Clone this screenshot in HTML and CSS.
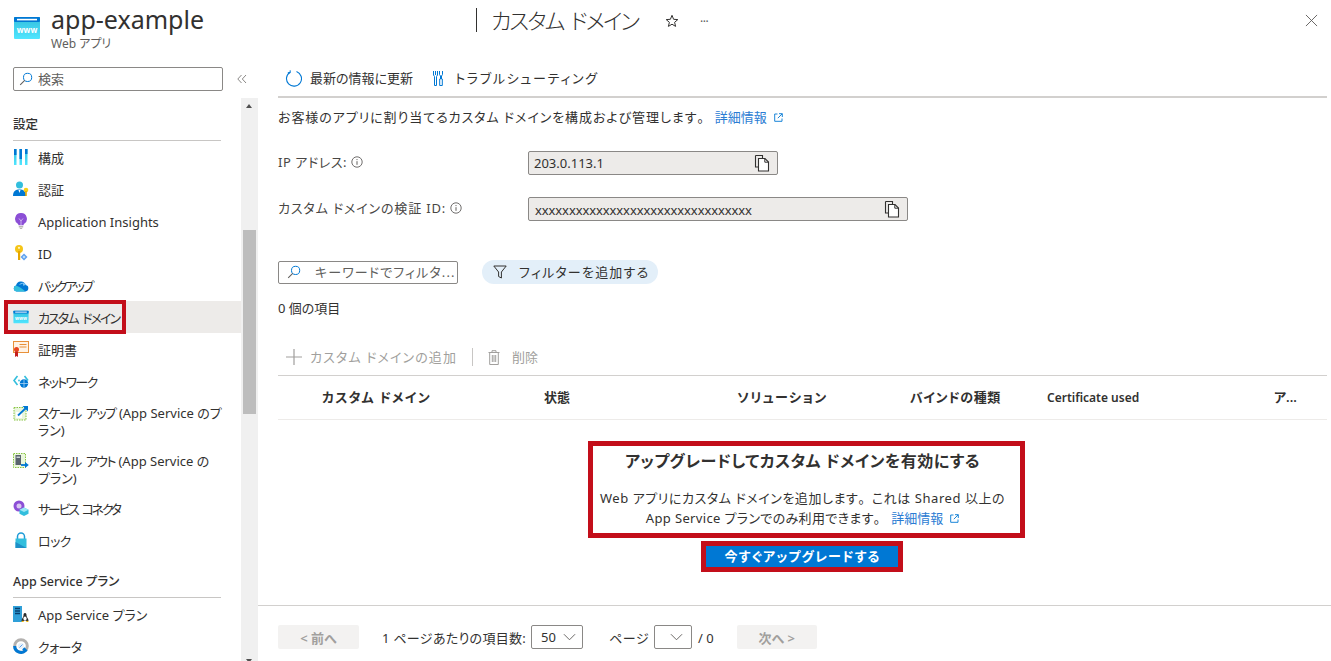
FILE: index.html
```html
<!DOCTYPE html>
<html lang="ja">
<head>
<meta charset="utf-8">
<title>カスタム ドメイン</title>
<link rel="stylesheet" href="styles.css">
</head>
<body>
<svg class="defs" width="0" height="0" aria-hidden="true">
  <defs>
    <linearGradient id="www" x1="0" y1="0" x2="0" y2="1"><stop offset="0" stop-color="#32bedd"/><stop offset="1" stop-color="#50e6ff"/></linearGradient>
    <symbol id="i-www" viewBox="0 0 26 22">
      <rect x="0" y="0" width="26" height="22" rx="1" fill="url(#www)"/>
      <rect x="0" y="0" width="26" height="5" rx="1" fill="#0078d4"/>
      <rect x="3" y="1.800" width="20" height="1.600" fill="#fff"/>
      <text x="13" y="15.500" text-anchor="middle" class="wwwtext">www</text>
    </symbol>
    <symbol id="i-search" viewBox="0 0 14 14">
      <circle cx="8.600" cy="5.400" r="4.100" fill="none" stroke="#0078d4" stroke-width="1"/>
      <path d="M5.700 8.300 1.200 12.800" stroke="#605e5c" stroke-width="1.100" fill="none"/>
    </symbol>
    <symbol id="i-copy" viewBox="0 0 16 18">
      <path d="M1.500 1.500h7l0 3M1.500 1.500v11.500h3" fill="none" stroke="#323130" stroke-width="1.100"/>
      <path d="M4.500 4.500h6.500l3.500 3.500v9h-10z" fill="#fff" stroke="#323130" stroke-width="1.100"/>
      <path d="M10.800 4.700v3.500h3.600" fill="none" stroke="#323130" stroke-width="1"/>
    </symbol>
    <symbol id="i-info" viewBox="0 0 12 12">
      <circle cx="6" cy="6" r="5.200" fill="none" stroke="#605e5c" stroke-width=".9"/>
      <path d="M6 5.200v3.600M6 3.100v1" stroke="#605e5c" stroke-width="1" fill="none"/>
    </symbol>
    <symbol id="i-ext" viewBox="0 0 9 9">
      <path d="M3.500 1H.7v7.300H8V5.500" fill="none" stroke="#0078d4" stroke-width=".9"/>
      <path d="M5 .7h3.300V4M8.200.8 3.800 5.200" fill="none" stroke="#0078d4" stroke-width=".9"/>
    </symbol>
    <symbol id="i-chev" viewBox="0 0 14 8">
      <path d="M1 1 7 7l6-6" fill="none" stroke="#605e5c" stroke-width="1"/>
    </symbol>
  </defs>
</svg>

<header class="top">
  <svg class="brand-icon"><use href="#i-www"/></svg>
  <div class="brand">
    <h1 class="brand-title">app-example</h1>
    <div class="brand-sub">Web アプリ</div>
  </div>
  <div class="blade-title"><span class="blade-bar"></span><span>カスタム ドメイン</span></div>
  <svg class="star" viewBox="0 0 14 14"><path d="M7 1.300 8.600 5.300l4.200.3-3.200 2.700 1 4.100L7 10.200l-3.600 2.200 1-4.100L1.200 5.600l4.200-.3z" fill="none" stroke="#323130" stroke-width="1"/></svg>
  <div class="more">···</div>
  <svg class="close" viewBox="0 0 14 14"><path d="M1 1l12 12M13 1 1 13" stroke="#605e5c" stroke-width="1" fill="none"/></svg>
</header>

<div class="layout">
  <aside class="side">
    <div class="side-search-row">
      <div class="side-search">
        <svg class="ico14"><use href="#i-search"/></svg>
        <span>検索</span>
      </div>
      <svg class="collapse" viewBox="0 0 10 10"><path d="M4.500 1 .8 5l3.700 4M9 1 5.300 5 9 9" fill="none" stroke="#8a8886" stroke-width="1"/></svg>
    </div>
    <div class="side-body">
      <nav class="nav">
        <div class="nav-head">設定</div>
        <a class="nav-item"><svg class="nav-ico" viewBox="0 0 16 16"><rect x="1" y="0" width="2.500" height="16" fill="url(#www)"/><rect x="1" y="0" width="2.500" height="6" fill="#0078d4"/><rect x="6.500" y="0" width="2.500" height="16" fill="url(#www)"/><rect x="6.500" y="0" width="2.500" height="10" fill="#0078d4"/><rect x="12" y="0" width="2.500" height="16" fill="url(#www)"/><rect x="12" y="0" width="2.500" height="5" fill="#0078d4"/></svg><span>構成</span></a>
        <a class="nav-item"><svg class="nav-ico" viewBox="0 0 16 16"><circle cx="6.500" cy="4" r="3.500" fill="#32bedd"/><path d="M0 15c0-5 2.500-6.500 6.500-6.500S13 10 13 15z" fill="#0078d4"/><path d="M5.500 9h2l-1 3z" fill="#fff"/><circle cx="13" cy="9" r="2.300" fill="#fcd116"/><rect x="12.200" y="10" width="1.600" height="5" fill="#e6a700"/></svg><span>認証</span></a>
        <a class="nav-item"><svg class="nav-ico" viewBox="0 0 16 16"><path d="M8 0a5.800 5.800 0 0 0-3.200 10.700c.5.400.7 1 .7 1.600h5c0-.6.2-1.200.7-1.600A5.800 5.800 0 0 0 8 0z" fill="#8c4fd6"/><path d="M6 5.500 8 8l2-2.500M8 8v4" stroke="#d9c7f2" stroke-width=".8" fill="none"/><path d="M5.800 13h4.400v1.500H5.800zM6.800 15h2.400v1H6.800z" fill="#b8b6b4"/></svg><span>Application Insights</span></a>
        <a class="nav-item"><svg class="nav-ico" viewBox="0 0 16 16"><circle cx="6" cy="4" r="4" fill="#f5c518"/><rect x="5" y="6" width="2.200" height="9" fill="#e6a700"/><circle cx="6" cy="2.800" r="1.100" fill="#fff4c2"/><path d="M11 8.500l3.500 3.500-3.500 3.500L7.500 12z" fill="#5ea0ef"/><path d="M11 10.500l1.500 1.500-1.500 1.500L9.500 12z" fill="#c3e3fb"/></svg><span>ID</span></a>
        <a class="nav-item"><svg class="nav-ico" viewBox="0 0 16 16"><path d="M3.500 14.500A3 3 0 0 1 3 8.600 5 5 0 0 1 12.700 8 3.300 3.300 0 0 1 12.500 14.500z" fill="#0078d4"/><path d="M6 8a4 4 0 0 1 6.600-.8l1 .6-3.600 1 .1-2.300" fill="#7cc4f5"/><path d="M3.500 14.500A3 3 0 0 1 3 8.600c3 1 6 3 9.500 5.900z" fill="#32bedd"/></svg><span class="ls-backup">バックアップ</span></a>
        <a class="nav-item is-on"><svg class="nav-ico" viewBox="0 0 15 12"><use href="#i-www"/></svg><span class="ls-domain">カスタム ドメイン</span></a>
        <a class="nav-item"><svg class="nav-ico" viewBox="0 0 16 16"><rect x=".5" y=".5" width="15" height="11" fill="#fff3e6" stroke="#e8913a"/><path d="M6.500 3.500h7M6.500 6h7" stroke="#e8913a" stroke-width="1.200"/><circle cx="3.500" cy="8.500" r="2.500" fill="#e8451f"/><path d="M2 10.500h3V16l-1.500-1L2 16z" fill="#c41f1f"/></svg><span>証明書</span></a>
        <a class="nav-item"><svg class="nav-ico" viewBox="0 0 16 16"><path d="M4.500 3 1 7.500 4.500 12" fill="none" stroke="#32bedd" stroke-width="1.600"/><path d="M11.500 3 15 7.500" fill="none" stroke="#32bedd" stroke-width="1.600"/><circle cx="11" cy="10.500" r="4.200" fill="#0078d4"/><path d="M7 10.500h8M11 6.500v8" stroke="#a9d3f2" stroke-width=".8"/><circle cx="6" cy="7.500" r=".9" fill="#32bedd"/></svg><span class="ls-network">ネットワーク</span></a>
        <a class="nav-item two"><svg class="nav-ico" viewBox="0 0 16 16"><rect x="1" y="2.500" width="12" height="12.500" fill="#eaf6dc" stroke="#86c440" stroke-dasharray="1.500 1"/><rect x="3" y="7" width="6" height="6" fill="#fff"/><path d="M5 10.500 14 2" stroke="#0078d4" stroke-width="1.800"/><path d="M9.500 1h5.500v5.500z" fill="#0078d4"/></svg><span><span class="kana">スケール アップ</span> (App Service のプ<br>ラン)</span></a>
        <a class="nav-item two"><svg class="nav-ico" viewBox="0 0 16 16"><rect x=".5" y=".5" width="12" height="14" fill="#eaf6dc" stroke="#86c440" stroke-dasharray="1.500 1"/><rect x="2.500" y="2" width="5.500" height="10" fill="#59636e"/><rect x="3.500" y="3.500" width="3.500" height="1.500" fill="#c8ced4"/><path d="M8 12h5.500" stroke="#0078d4" stroke-width="1.800"/><path d="M12 9l3.800 3-3.800 3z" fill="#0078d4"/></svg><span><span class="kana">スケール アウト</span> (App Service の<br>プラン)</span></a>
        <a class="nav-item"><svg class="nav-ico" viewBox="0 0 16 16"><circle cx="6" cy="6" r="5.500" fill="#8c4fd6"/><circle cx="6" cy="6" r="2.500" fill="#d9c7f2"/><path d="M11 7.500l4.500 2.200v4.100L11 16l-4.500-2.200V9.700z" fill="#32bedd"/><path d="M11 7.500l4.500 2.200L11 12 6.500 9.700z" fill="#9ce7f5"/></svg><span class="ls-conn">サービス コネクタ</span></a>
        <a class="nav-item"><svg class="nav-ico" viewBox="0 0 16 16"><path d="M4.500 7V4.500a3.500 3.500 0 0 1 7 0V7" fill="none" stroke="#1e9bd7" stroke-width="1.500"/><rect x="2.500" y="6.500" width="11" height="9.500" fill="#32bedd"/><path d="M2.500 10 13.500 16h-11z" fill="#1e8fc7"/></svg><span class="ls-short">ロック</span></a>
        <div class="nav-head second">App Service プラン</div>
        <a class="nav-item"><svg class="nav-ico" viewBox="0 0 16 16"><rect x="0" y="0" width="9" height="16" fill="#2f9fd8"/><path d="M2 2.500h5M2 5h5M2 7.500h5" stroke="#063f6e" stroke-width="1.300"/><path d="M12 7c-1.300 0-1.500 1.200-1.500 2.500 0 1.500-2 3-2 5.500h7c0-2.500-2-4-2-5.500C13.500 8.200 13.300 7 12 7z" fill="#2a2a2a"/><ellipse cx="12" cy="12.600" rx="1.600" ry="2.200" fill="#fff"/><path d="M8 16l2-1.500 1 1.500zM16 16l-2-1.500-1 1.500z" fill="#f5b400"/></svg><span>App Service プラン</span></a>
        <a class="nav-item"><svg class="nav-ico" viewBox="0 0 16 16"><circle cx="8" cy="8" r="6.300" fill="none" stroke="#b3b1af" stroke-width="3"/><path d="M1.700 8A6.300 6.300 0 0 0 12.500 12.500L10.200 10.200" fill="none" stroke="#0078d4" stroke-width="3"/><circle cx="8" cy="8" r="3" fill="#e6f1fa"/><path d="M6.500 9.500l3-3" stroke="#5ea0ef" stroke-width="1"/></svg><span class="ls-short">クォータ</span></a>
      </nav>
      <div class="scrollbar">
        <div class="sb-up"></div>
        <div class="sb-thumb"></div>
        <div class="sb-down"></div>
      </div>
    </div>
  </aside>

  <main class="main">
    <div class="toolbar">
      <a class="tool"><svg class="tool-ico" viewBox="0 0 17 17"><path d="M5.200 2.200A7.500 7.500 0 1 0 11.500 1.600" fill="none" stroke="#0078d4" stroke-width="1.100"/><path d="M5.200 .3v2.400H2.800" fill="none" stroke="#0078d4" stroke-width="1"/></svg><span>最新の情報に更新</span></a>
      <a class="tool tool-wide"><svg class="tool-ico tr" viewBox="0 0 12 17"><path d="M1.500 1v4l1 1.500v9h2v-9l1-1.500V1M3.500 1v4" fill="none" stroke="#0078d4" stroke-width="1"/><path d="M7.500 1v3.500l1 1.500v3h-.8v6.500h2.600V9h-.8V6l1-1.500V1" fill="none" stroke="#0078d4" stroke-width="1"/></svg><span>トラブルシューティング</span></a>
    </div>
    <div class="content">
      <p class="desc"><span class="desc-text">お客様のアプリに割り当てるカスタム ドメインを構成および管理します<span class="fw">。</span></span> <a class="link">詳細情報<svg class="ext"><use href="#i-ext"/></svg></a></p>
      <div class="field first">
        <label class="field-label"><span class="ls-ip">IP アドレス:</span> <svg class="info"><use href="#i-info"/></svg></label>
        <div class="ro ro-ip"><span>203.0.113.1</span><svg class="copy"><use href="#i-copy"/></svg></div>
      </div>
      <div class="field">
        <label class="field-label"><span class="ls-verify">カスタム ドメインの検証 ID:</span> <svg class="info"><use href="#i-info"/></svg></label>
        <div class="ro ro-id"><span>xxxxxxxxxxxxxxxxxxxxxxxxxxxxxxxx</span><svg class="copy"><use href="#i-copy"/></svg></div>
      </div>
      <div class="filters">
        <div class="filter-box"><svg class="ico14"><use href="#i-search"/></svg><span>キーワードでフィルタ...</span></div>
        <div class="pill"><svg class="pill-ico" viewBox="0 0 14 14"><path d="M.8 1h12.400L8.400 7v6l-2.800-1.500V7z" fill="none" stroke="#323130" stroke-width="1"/></svg><span>フィルターを追加する</span></div>
      </div>
      <div class="count">0 個の項目</div>
      <div class="cmd">
        <a class="cmd-btn"><svg class="cmd-plus" viewBox="0 0 16 16"><path d="M8 0v16M0 8h16" stroke="#a19f9d" stroke-width="1.200"/></svg><span class="cmd-add">カスタム ドメインの追加</span></a>
        <div class="cmd-sep"></div>
        <a class="cmd-btn"><svg class="cmd-trash" viewBox="0 0 12 15"><path d="M.5 2.500h11M4 2.500V.7h4v1.800M1.700 2.500v12h8.600v-12M4.300 5v7M6 5v7M7.700 5v7" fill="none" stroke="#a19f9d" stroke-width="1"/></svg><span>削除</span></a>
      </div>
      <div class="thead">
        <div class="th-domain">カスタム ドメイン</div>
        <div>状態</div>
        <div class="th-solution">ソリューション</div>
        <div class="th-bind">バインドの種類</div>
        <div class="th-en">Certificate used</div>
        <div>ア...</div>
      </div>
      <section class="empty">
        <h2 class="empty-title">アップグレードしてカスタム ドメインを有効にする</h2>
        <p class="empty-text">Web アプリにカスタム ドメインを追加します<span class="fw">。</span>これは Shared 以上の<br><span class="empty-second">App Service プランでのみ利用できます<span class="fw">。</span></span> <a class="link">詳細情報<svg class="ext"><use href="#i-ext"/></svg></a></p>
        <button class="upgrade" type="button">今すぐアップグレードする</button>
      </section>
    </div>
    <footer class="pager">
      <div class="pg-btn pg-prev">&lt; 前へ</div>
      <span class="pg-label pg-per">1 ページあたりの項目数:</span>
      <div class="pg-sel sel-50"><span>50</span><svg class="chev"><use href="#i-chev"/></svg></div>
      <span class="pg-label pg-page">ページ</span>
      <div class="pg-sel sel-page"><svg class="chev"><use href="#i-chev"/></svg></div>
      <span class="pg-label pg-of">/ 0</span>
      <div class="pg-btn pg-next">次へ &gt;</div>
    </footer>
  </main>
</div>

<div class="mark mark-nav"></div>
<div class="mark mark-empty"></div>
<div class="mark mark-btn"></div>
</body>
</html>
```

FILE: styles.css
```css
* { box-sizing: border-box; }
html, body { margin: 0; padding: 0; height: 100%; }
body {
  position: relative;
  width: 1331px;
  height: 661px;
  overflow: hidden;
  background: #fff;
  color: #323130;
  font-family: "Noto Sans", "Noto Sans CJK JP", sans-serif;
  font-size: 13px;
  font-feature-settings: "palt";
  line-height: 17px;
}
.defs { position: absolute; }
.wwwtext { font: 700 8px "Noto Sans", sans-serif; fill: #fff; }
.fw { font-feature-settings: normal; }

/* header */
.top { display: flex; align-items: flex-start; height: 62px; position: relative; }
.brand-icon { width: 26px; height: 22px; margin: 17px 0 0 14px; flex: none; }
.brand { margin-left: 11px; width: 425px; flex: none; }
.brand-title { margin: 2px 0 0; font-size: 25px; line-height: 34px; font-weight: 400; }
.brand-sub { font-size: 12px; color: #605e5c; line-height: 16px; }
.blade-title {
  display: flex; align-items: center; height: 30px; margin-top: 5px; width: 189px; flex: none;
  font-size: 22px; line-height: 30px; font-weight: 300; letter-spacing: -1.900px; word-spacing: 3px; color: #323130;
}
.blade-bar { width: 1px; height: 24px; background: #323130; margin-right: 14px; flex: none; }
.star { width: 14px; height: 14px; margin-top: 14px; flex: none; }
.more { margin: 13px 0 0 21px; color: #605e5c; font-size: 12px; letter-spacing: -.5px; flex: none; }
.close { position: absolute; left: 1305px; top: 14px; width: 13px; height: 13px; }

/* layout */
.layout { display: flex; height: 599px; }
.side { width: 258px; flex: none; display: flex; flex-direction: column; }
.side-search-row { display: flex; align-items: center; height: 36px; padding: 5px 0 7px 13px; }
.side-search {
  width: 210px; height: 24px; border: 1px solid #8a8886; border-radius: 2px;
  display: flex; align-items: center; gap: 5px; padding-left: 5px; color: #605e5c;
}
.ico14 { width: 14px; height: 14px; flex: none; }
.collapse { width: 10px; height: 10px; margin-left: 14px; }
.side-body { display: flex; flex: 1; min-height: 0; }
.nav { width: 241px; flex: none; padding-top: 1px; overflow: hidden; }
.nav-head {
  height: 42px; margin-left: 13px; margin-right: 20px; padding-top: 17px;
  border-bottom: 1px solid #c8c6c4; font-weight: 500; font-size: 12.500px;
}
.nav-item {
  display: flex; align-items: center; height: 32px; padding-left: 13px; padding-right: 12px;
  color: #323130;
}
.nav-item > span { margin-left: 9px; padding-top: 2px; white-space: nowrap; }
.nav-item.two { height: 47.500px; align-items: flex-start; padding-top: 8px; }
.nav-item.two > span { padding-top: 0; }
.nav-item.is-on { background: #edebe9; margin-left: 4px; padding-left: 9px; }
.nav-ico { width: 16px; height: 16px; flex: none; }
.kana { letter-spacing: -1.500px; word-spacing: 3px; }
.ls-domain { letter-spacing: -1.900px; word-spacing: 3px; }
.ls-backup { letter-spacing: -2.400px; }
.ls-network { letter-spacing: -1.700px; }
.ls-conn { letter-spacing: -2.300px; word-spacing: 3px; }
.ls-short { letter-spacing: -.6px; }
.scrollbar { width: 17px; flex: none; background: #f0f0f0; position: relative; }
.sb-thumb { position: absolute; left: 2px; top: 132px; width: 13px; height: 184px; background: #bdbdbd; }
.sb-up, .sb-down { position: absolute; left: 5px; width: 0; height: 0; border-left: 3.500px solid transparent; border-right: 3.500px solid transparent; }
.sb-up { top: 6px; border-bottom: 4px solid #505050; }
.sb-down { bottom: -2px; border-top: 4px solid #505050; }

/* main */
.main { flex: 1; min-width: 0; display: flex; flex-direction: column; }
.toolbar {
  margin: 0 4px 0 20px; height: 36px; border-bottom: 2px solid #d2d0ce; padding-left: 7px;
  display: flex; align-items: center; gap: 19px; padding-bottom: 2px;
}
.tool { display: flex; align-items: center; gap: 8px; font-size: 13px; }
.tool-wide { gap: 11px; letter-spacing: 1.700px; }
.tool-ico { width: 17px; height: 17px; flex: none; }
.tool-ico.tr { width: 12px; }
.content { flex: 1; min-height: 0; padding: 11px 4px 0 20px; }
.desc { margin: 0; height: 17px; }
.desc-text { letter-spacing: .92px; }
.link { color: #2b7cd3; letter-spacing: 0; }
.ext { width: 9px; height: 9px; margin-left: 7px; }
.field { display: flex; align-items: center; height: 24px; margin-top: 22px; }
.field.first { margin-top: 25px; }
.field-label { width: 250px; flex: none; color: #484644; display: flex; align-items: center; gap: 4px; padding-bottom: 2px; }
.ls-ip { letter-spacing: .55px; }
.ls-verify { letter-spacing: .85px; }
.info { width: 12px; height: 12px; }
.ro {
  height: 24px; background: #edebe9; border: 1px solid #8a8886; border-radius: 2px;
  display: flex; align-items: center; justify-content: space-between; padding: 0 7px 0 5px; font-size: 13px;
}
.ro-ip { width: 250px; }
.ro-id { width: 380px; }
.ro-id span { letter-spacing: -.1px; padding-top: 2px; padding-left: 1px; }
.copy { width: 16px; height: 18px; flex: none; }
.filters { display: flex; align-items: center; height: 24px; margin-top: 39px; gap: 24px; }
.filter-box {
  width: 180px; height: 23px; border: 1px solid #8a8886; border-radius: 2px; display: flex; align-items: center;
  padding-left: 8px; gap: 14px; color: #605e5c; overflow: hidden; white-space: nowrap; letter-spacing: 1.100px;
}
.pill { width: 176px; height: 24px; border-radius: 12px; background: #e3eff9; display: flex; align-items: center; padding-left: 11px; gap: 12px; letter-spacing: 1.200px; }
.pill-ico { width: 14px; height: 14px; flex: none; }
.count { margin-top: 16px; height: 17px; }
.cmd { display: flex; align-items: center; height: 24px; margin-top: 28px; padding-left: 8px; color: #a19f9d; }
.cmd-btn { display: flex; align-items: center; }
.cmd-add { letter-spacing: 1.100px; }
.cmd-plus { width: 16px; height: 16px; margin-right: 8px; }
.cmd-sep { width: 1px; height: 18px; background: #c8c6c4; margin: 0 15px; }
.cmd-trash { width: 12px; height: 15px; margin-right: 12px; }
.thead {
  display: grid; grid-template-columns: 222px 193px 173px 137px 227px 1fr;
  align-items: center; height: 45px; margin-top: 6px; padding-left: 44px;
  border-top: 1px solid #d2d0ce; border-bottom: 1px solid #edebe9; font-weight: 600; font-size: 13px;
}
.th-domain { letter-spacing: 1.200px; }
.th-solution { letter-spacing: 1.400px; }
.th-bind { letter-spacing: .6px; }
.th-en { font-size: 12px; }
.empty { display: flex; flex-direction: column; align-items: center; padding-top: 31px; }
.empty-title { margin: 0; font-size: 16px; line-height: 20px; font-weight: 700; letter-spacing: .5px; }
.empty-text { margin: 17px 0 0; text-align: center; line-height: 20px; letter-spacing: .55px; }
.empty-second { letter-spacing: .35px; }
.upgrade {
  width: 194px; height: 21px; margin-top: 18px; border: 0; background: #0078d4; color: #fff;
  font: 700 13px/21px "Noto Sans", "Noto Sans CJK JP", sans-serif; font-feature-settings: "palt"; padding: 0; letter-spacing: 1.150px;
}
.pager {
  height: 56px; border-top: 1px solid #d2d0ce; display: flex; align-items: center; padding: 7px 0 0 20px; flex: none;
}
.pg-btn { width: 81px; height: 24px; background: #f3f2f1; border-radius: 2px; color: #a19f9d; display: flex; align-items: center; justify-content: center; font-weight: 600; padding-top: 2px; }
.pg-label { margin-left: 23px; padding-top: 2px; }
.pg-per { letter-spacing: .3px; }
.pg-sel { height: 24px; border: 1px solid #8a8886; border-radius: 2px; display: flex; align-items: center; margin-left: 5px; padding-left: 9px; }
.sel-50 { width: 52px; gap: 7px; }
.sel-page { width: 38px; justify-content: flex-end; padding-right: 8px; margin-left: 5px; }
.chev { width: 13px; height: 8px; flex: none; }
.pg-page { margin-left: 26px; letter-spacing: .5px; }
.pg-of { margin-left: 6px; }
.pg-next { margin-left: 23px; width: 80px; }

/* annotation frames laid over the screenshot */
.mark { position: absolute; border: 4px solid #c30e1a; pointer-events: none; }
.mark-nav { left: 4px; top: 300px; width: 122px; height: 34px; }
.mark-empty { left: 588px; top: 441px; width: 437px; height: 97px; border-width: 5px; }
.mark-btn { left: 701px; top: 541px; width: 202px; height: 31px; border-width: 5px; }
```
